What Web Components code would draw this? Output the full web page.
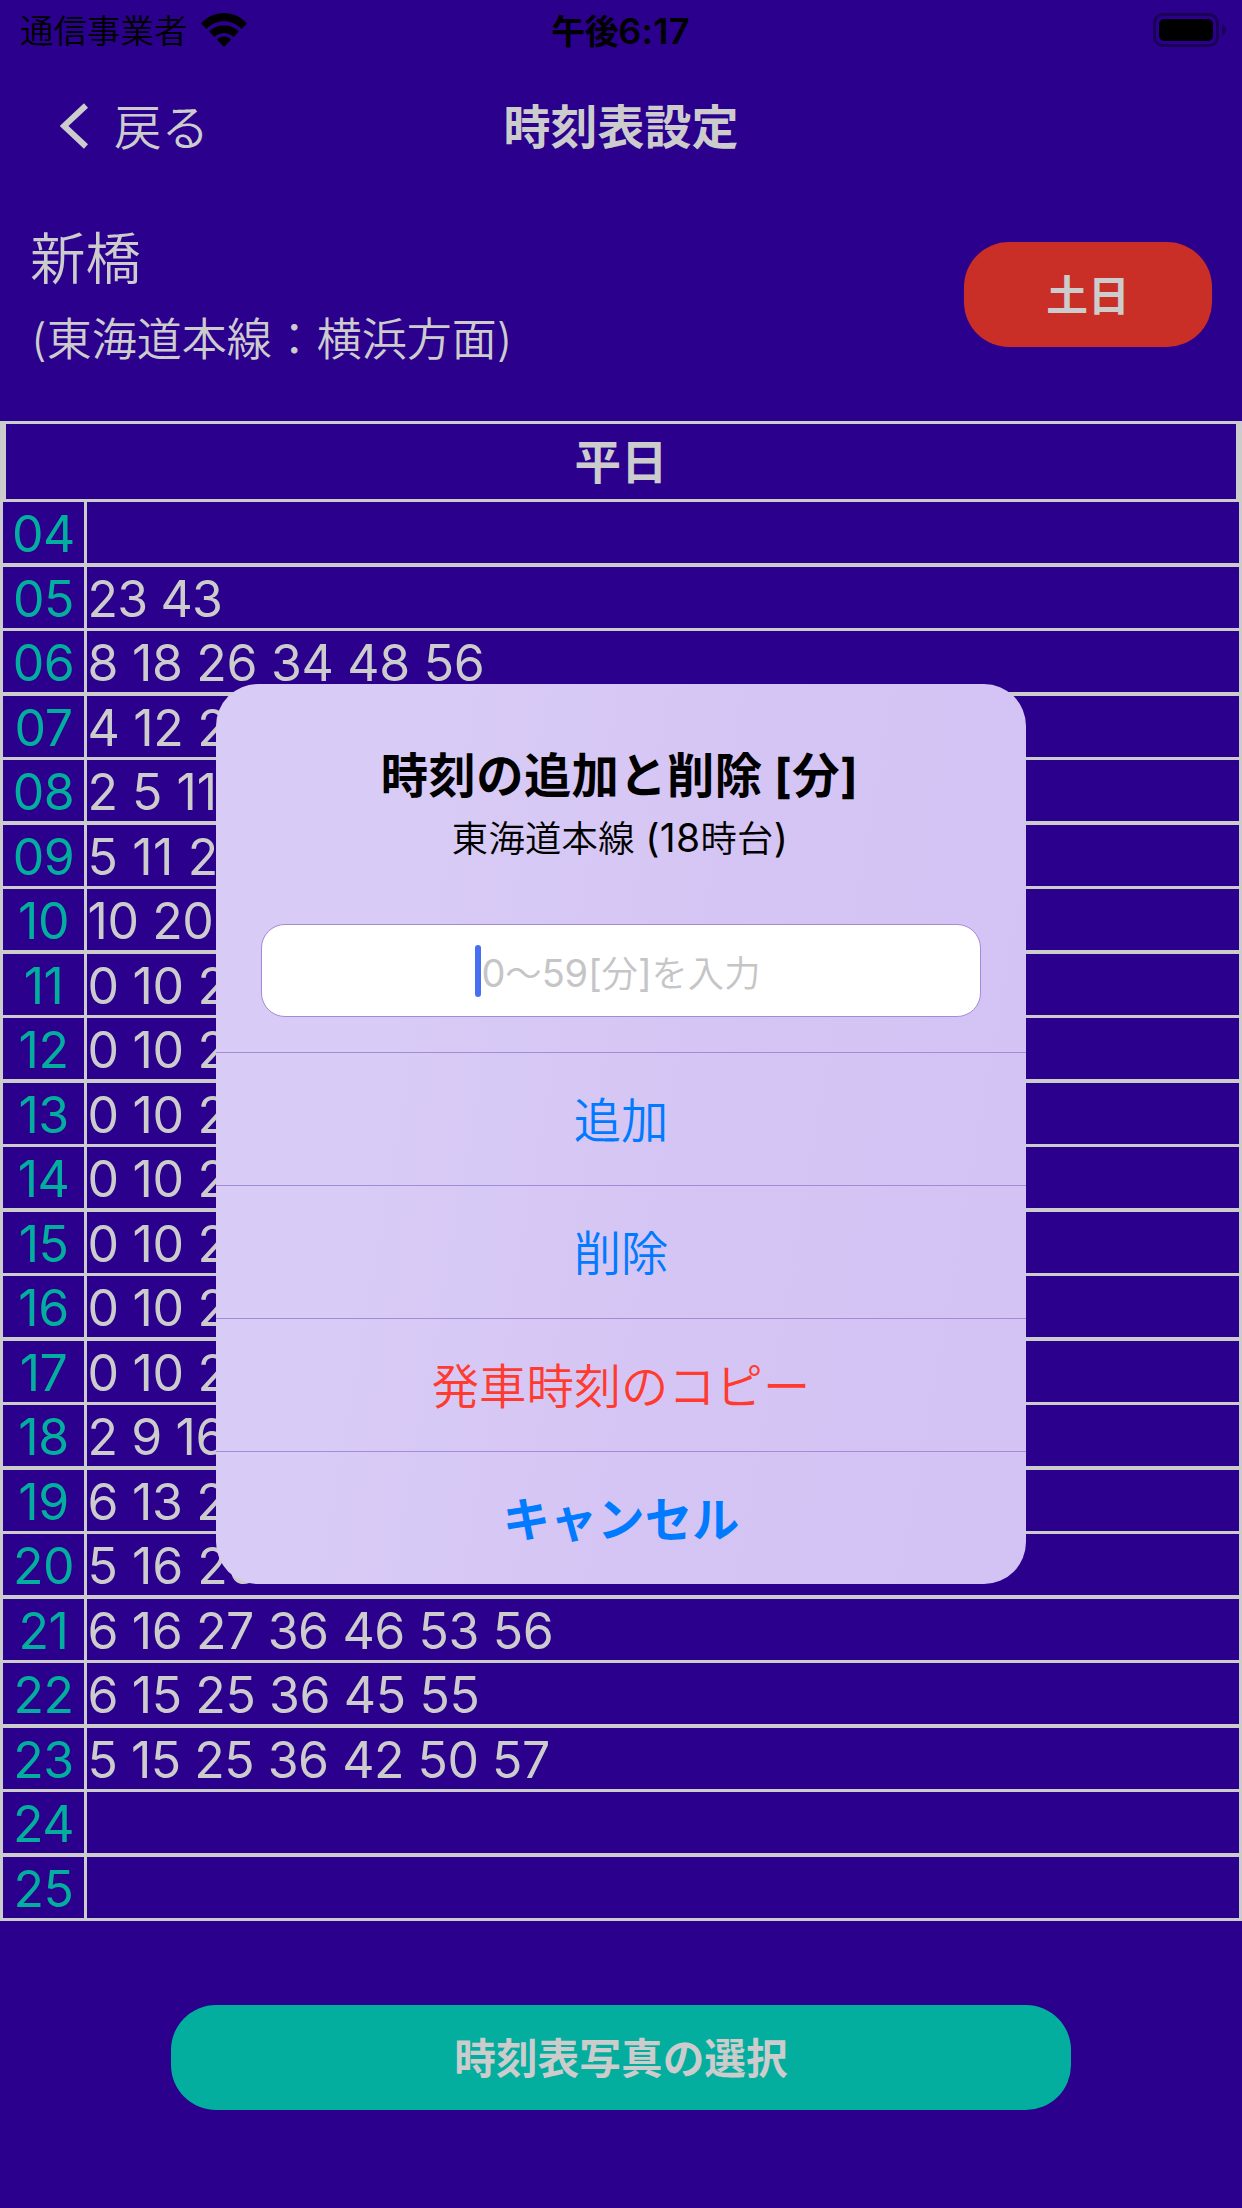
<!DOCTYPE html>
<html lang="ja">
<head>
<meta charset="utf-8">
<title>時刻表設定</title>
<style>
html,body{margin:0;padding:0;background:#2b008c}
body{width:1242px;height:2208px;overflow:hidden;font-family:Inter,"Noto Sans CJK JP",sans-serif}
</style>
</head>
<body>
<timetable-app></timetable-app>
<script>
const define = (name, html, init) => {
  const tpl = document.createElement('template');
  tpl.innerHTML = html;
  customElements.define(name, class extends HTMLElement {
    constructor() {
      super();
      this.attachShadow({ mode: 'open' }).append(tpl.content.cloneNode(true));
    }
    connectedCallback() { if (init) init(this, this.shadowRoot); }
  });
};

define('status-bar', `
<style>
:host{display:grid;grid-template-columns:1fr auto 1fr;align-items:center;height:60px;box-sizing:border-box;padding:0 15px 0 20px;color:#000}
.carrier{display:flex;align-items:center;gap:13px;font-size:33.5px;font-weight:350;line-height:56px}
.carrier span{padding-top:2px}
.time{font-size:36px;font-weight:600;line-height:56px;letter-spacing:.3px;padding:3px 6px 0 0}
.battery{justify-self:end;display:block}
svg{display:block}
.cjk{font-size:34px;font-weight:700;letter-spacing:-.5px}
</style>
<div class="carrier"><span>通信事業者</span>
<svg width="46" height="34" viewBox="0 0 46 34"><path d="M0 10.5C12.500-3.500 33.500-3.500 46 10.500L40.500 16C30.500 5.800 15.500 5.800 5.500 16Z"/><path d="M8 18.500C16.500 10 29.500 10 38 18.500L32.500 24C27 18.600 19 18.600 13.500 24Z"/><path d="M16 26.500C20 22.500 26 22.500 30 26.500L23 34Z"/></svg></div>
<div class="time"><span class="cjk">午後</span>6:17</div>
<svg class="battery" width="74" height="34" viewBox="0 0 74 34"><rect x="1.500" y="1.500" width="63" height="31" rx="8.500" fill="none" stroke="#1b0058" stroke-width="3"/><rect x="6" y="6" width="54" height="22" rx="5"/><path d="M69 11C74 13.500 74 20.500 69 23Z" fill="#1b0058"/></svg>`);

define('nav-bar', `
<style>
:host{display:grid;grid-template-columns:1fr auto 1fr;align-items:center;height:132px;padding:0 60px;box-sizing:border-box;color:#ccc}
.back{display:flex;align-items:center;gap:26px;font-size:47.500px;font-weight:350;line-height:60px}
.back span{padding-top:4px}
.title{font-size:47px;font-weight:700;line-height:60px;padding-top:2px}
svg{display:block}
</style>
<div class="back"><svg width="28" height="46" viewBox="0 0 28 46"><path d="M26 2.500L4 23L26 43.500" fill="none" stroke="#ccc" stroke-width="6"/></svg><span>戻る</span></div>
<div class="title"><slot></slot></div>`);

define('pill-button', `
<style>
:host{display:flex;align-items:center;justify-content:center;height:105px;width:var(--w);background:var(--bg);border-radius:45px;color:#ccc;font-size:41.700px;font-weight:700;line-height:60px}
span{padding-top:3px}
</style><span><slot></slot></span>`);

define('station-header', `
<style>
:host{display:flex;justify-content:space-between;height:229px;padding:35px 30px 0 30px;box-sizing:border-box;color:#ccc}
.name{font-size:55.500px;line-height:64px;font-weight:350}
.line{font-size:45px;line-height:60px;margin-top:19px;font-weight:350;padding-left:1px}
pill-button{margin-top:15px}
</style>
<div><div class="name">新橋</div><div class="line">(東海道本線：横浜方面)</div></div>
<pill-button style="--w:248px;--bg:#ca2f27">土日</pill-button>`);

define('hour-row', `
<style>
:host{display:grid;grid-template-columns:81px 1fr;column-gap:3px;height:61px;background:#ccc;font-size:50px;line-height:64px;white-space:pre}
span{background:#2b008c;height:61px;overflow:hidden}
.h{color:#03ae9f;text-align:center;letter-spacing:-.5px}
.m{color:#ccc;padding-left:.5px}
</style><span class="h"></span><span class="m"></span>`, (el, root) => {
  root.querySelector('.h').textContent = el.getAttribute('hour');
  const m = root.querySelector('.m');
  m.textContent = el.getAttribute('minutes');
  m.style.letterSpacing = el.getAttribute('tracking') + 'px';
});

define('time-table', `
<style>
:host{display:block;background:#ccc;padding:3px 3px 0}
.head{margin:0 3px 3px;height:75px;background:#2b008c;color:#ccc;font-size:46.500px;font-weight:700;line-height:77px;text-align:center}
.rows{display:flex;flex-direction:column}
</style>
<div class="head">平日</div><div class="rows"></div>`, (el, root) => {
  const rows = [['04',''],['05','23 43',-.8],['06','8 18 26 34 48 56',-.3],['07','4 12 2'],['08','2 5 11',0],['09','5 11 2',.2],['10','10 20',-.4],
    ['11','0 10 2'],['12','0 10 2'],['13','0 10 2'],['14','0 10 2'],['15','0 10 2'],['16','0 10 2'],['17','0 10 2'],['18','2 9 16',-.4],
    ['19','6 13 2'],['20','5 16 26',0],['21','6 16 27 36 46 53 56',-.4],['22','6 15 25 36 45 55',-.4],['23','5 15 25 36 42 50 57',-.5],['24',''],['25','']];
  const box = root.querySelector('.rows');
  rows.forEach(([h, m, t = -.3], i) => {
    const r = document.createElement('hour-row');
    r.setAttribute('hour', h);
    r.setAttribute('minutes', m);
    r.setAttribute('tracking', t);
    r.style.marginBottom = i % 2 ? '3px' : '4px';
    box.append(r);
  });
});

define('alert-action', `
<style>
:host{display:flex;align-items:center;justify-content:center;height:133px;box-sizing:border-box;border-top:1px solid #a58ad8;color:#007aff;font-size:47.300px;font-weight:350;line-height:60px}
:host([kind=danger]){color:#ff3b30}
:host([kind=cancel]){font-weight:700}
span{padding-top:4px}
</style><span><slot></slot></span>`);

define('alert-dialog', `
<style>
:host{display:flex;flex-direction:column;width:810px;height:900px;border-radius:42px;overflow:hidden;color:#000;background:linear-gradient(100deg,#d8cbf5 0%,#d8cbf5 25%,#d5c5f4 55%,#d3c3f5 100%)}
.head{height:368px;box-sizing:border-box;padding:62px 45px 0;text-align:center}
.title{font-size:47.300px;font-weight:700;line-height:60px;letter-spacing:.4px;padding-right:3px}
.sub{font-size:36.300px;font-weight:350;line-height:48px;margin-top:8px;letter-spacing:.3px;padding-right:2px}
.lat{font-weight:400;font-size:39px}
.field{display:flex;align-items:center;justify-content:center;height:93px;box-sizing:border-box;margin-top:61px;background:#fff;border:1px solid #a58ad8;border-radius:24px;font-size:36.300px;font-weight:350;color:#c5c5c7;padding-right:7px}
.caret{width:6px;height:52px;border-radius:3px;background:#476ff2;margin-right:1px}
.field .lat{font-size:38px;letter-spacing:-.2px}
</style>
<div class="head"><div class="title">時刻の追加と削除 [分]</div><div class="sub">東海道本線 <span class="lat">(18</span>時台<span class="lat">)</span></div>
<div class="field"><i class="caret"></i><span><span class="lat">0</span>〜<span class="lat">59[</span>分<span class="lat">]</span>を入力</span></div></div>
<alert-action>追加</alert-action>
<alert-action>削除</alert-action>
<alert-action kind="danger">発車時刻のコピー</alert-action>
<alert-action kind="cancel">キャンセル</alert-action>`);

define('timetable-app', `
<style>
:host{display:flex;flex-direction:column;position:relative;width:1242px;height:2208px;background:#2b008c}
.footer{display:flex;justify-content:center;padding-top:84px}
alert-dialog{position:absolute;left:216px;top:684px}
</style>
<status-bar></status-bar>
<nav-bar>時刻表設定</nav-bar>
<station-header></station-header>
<time-table></time-table>
<div class="footer"><pill-button style="--w:900px;--bg:#03ae9f">時刻表写真の選択</pill-button></div>
<alert-dialog></alert-dialog>`);
</script>
</body>
</html>
